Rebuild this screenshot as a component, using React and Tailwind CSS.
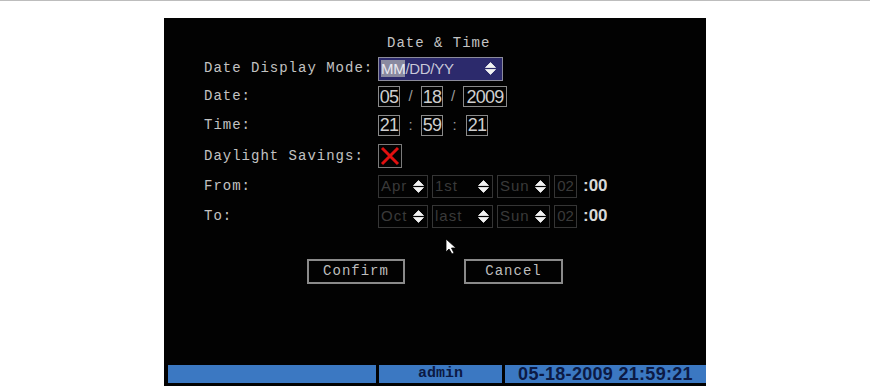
import React from 'react';

const mono = { fontFamily: '"Liberation Mono", "DejaVu Sans Mono", monospace' };
const sans = { fontFamily: '"Liberation Sans", Arial, sans-serif' };

const Arrows = ({ color = '#f2f2f2' }) => (
  <svg width="11" height="13" viewBox="0 0 11 13" className="shrink-0">
    <path d="M5.5 0.5 L10.5 5.5 L0.5 5.5 Z" fill={color} strokeLinejoin="round" stroke={color} strokeWidth="0.8" />
    <path d="M0.5 7.5 L10.5 7.5 L5.5 12.5 Z" fill={color} strokeLinejoin="round" stroke={color} strokeWidth="0.8" />
  </svg>
);

const Label = ({ children }) => (
  <div className="w-[174px] text-[14px] tracking-[1px] text-[#c2c2c2]" style={mono}>
    {children}
  </div>
);

const Box = ({ children, w }) => (
  <div
    className={`${w} h-[21px] border border-[#8a8a8a] flex items-center justify-center text-[18px] tracking-[-0.8px] text-[#cfcfcf] leading-none`}
    style={sans}
  >
    {children}
  </div>
);

const Sep = ({ children, w }) => (
  <div className={`${w} text-center text-[15px] text-[#9a9a9a]`} style={sans}>
    {children}
  </div>
);

const DimSelect = ({ text, w }) => (
  <div className={`${w} h-[23px] border border-[#353535] flex items-center justify-between pl-[2px] pr-[3px]`}>
    <span className="text-[15px] tracking-[1px] text-[#3a3a3a]" style={sans}>{text}</span>
    <Arrows />
  </div>
);

const DimRow = ({ month, week }) => (
  <div className="flex items-center gap-[4px]">
    <DimSelect text={month} w="w-[50px]" />
    <DimSelect text={week} w="w-[61px]" />
    <DimSelect text="Sun" w="w-[53px]" />
    <div className="w-[23px] h-[23px] border border-[#353535] flex items-center justify-center text-[15px] text-[#3a3a3a]" style={sans}>02</div>
    <span className="ml-[2px] text-[17px] font-bold text-[#d8d8d8]" style={sans}>:00</span>
  </div>
);

export default function App() {
  return (
    <div className="w-[870px] h-[386px] bg-white border-t border-[#bdbdbd] overflow-hidden">
      <div className="ml-[164px] mt-[17px] w-[542px] h-[368px] bg-[#020202] flex flex-col relative">
        <div className="h-[15px]" />
        <div className="h-[20px] flex items-center">
          <div className="ml-[223px] text-[14px] tracking-[1px] text-[#c4c4c4]" style={mono}>Date &amp; Time</div>
        </div>

        <div className="pl-[40px] flex flex-col">
          <div className="h-[31px] flex items-center">
            <Label>Date Display Mode:</Label>
            <div className="w-[125px] h-[24px] bg-[#2c2a6c] border border-[#8c8c9c] flex items-center justify-between pl-[2px] pr-[6px]">
              <span className="text-[15px] tracking-[-0.3px] text-[#c8c8d8] leading-none" style={sans}>
                <span className="bg-[#8a8aa0] text-[#e8e8f0]">MM</span>/DD/YY
              </span>
              <Arrows />
            </div>
          </div>

          <div className="h-[25px] flex items-center">
            <Label>Date:</Label>
            <Box w="w-[22px]">05</Box>
            <Sep w="w-[21px]">/</Sep>
            <Box w="w-[22px]">18</Box>
            <Sep w="w-[20px]">/</Sep>
            <Box w="w-[44px]">2009</Box>
          </div>

          <div className="h-[32px] flex items-center">
            <Label>Time:</Label>
            <Box w="w-[22px]">21</Box>
            <Sep w="w-[21px]">:</Sep>
            <Box w="w-[22px]">59</Box>
            <Sep w="w-[23px]">:</Sep>
            <Box w="w-[22px]">21</Box>
          </div>

          <div className="h-[30px] flex items-center">
            <Label>Daylight Savings:</Label>
            <div className="w-[24px] h-[24px] border border-[#7a7a7a] flex items-center justify-center">
              <svg width="20" height="20" viewBox="0 0 20 20">
                <path d="M2 2 L18 18 M18 2 L2 18" stroke="#e01010" strokeWidth="3" />
              </svg>
            </div>
          </div>

          <div className="h-[30px] flex items-center">
            <Label>From:</Label>
            <DimRow month="Apr" week="1st" />
          </div>

          <div className="h-[30px] flex items-center">
            <Label>To:</Label>
            <DimRow month="Oct" week="last" />
          </div>
        </div>

        <div className="mt-[28px] h-[25px] flex">
          <button className="ml-[143px] w-[98px] h-[25px] border-2 border-[#8a8a8a] text-[14px] tracking-[1px] text-[#bdbdbd]" style={mono}>
            Confirm
          </button>
          <button className="ml-[59px] w-[99px] h-[25px] border-2 border-[#8a8a8a] text-[14px] tracking-[1px] text-[#bdbdbd]" style={mono}>
            Cancel
          </button>
        </div>

        <div className="flex-1" />

        <div className="h-[18px] flex gap-[3px] pl-[4px]">
          <div className="w-[208px] bg-[#3b78c2]" />
          <div className="w-[123px] bg-[#3b78c2] flex items-center justify-center text-[15px] font-bold text-[#0c1a44]" style={mono}>
            admin
          </div>
          <div className="flex-1 bg-[#3b78c2] flex items-center justify-center text-[18px] font-bold text-[#0c1a44] tracking-[0.3px]" style={sans}>
            05-18-2009 21:59:21
          </div>
        </div>
        <div className="h-[3px]" />

        <svg className="absolute left-[281px] top-[220px]" width="12" height="17" viewBox="0 0 12 17">
          <path d="M1 1 L1 14 L4 11 L7 16 L9 15 L6.5 10 L11 10 Z" fill="#ffffff" stroke="#000" strokeWidth="0.8" />
        </svg>
      </div>
    </div>
  );
}
